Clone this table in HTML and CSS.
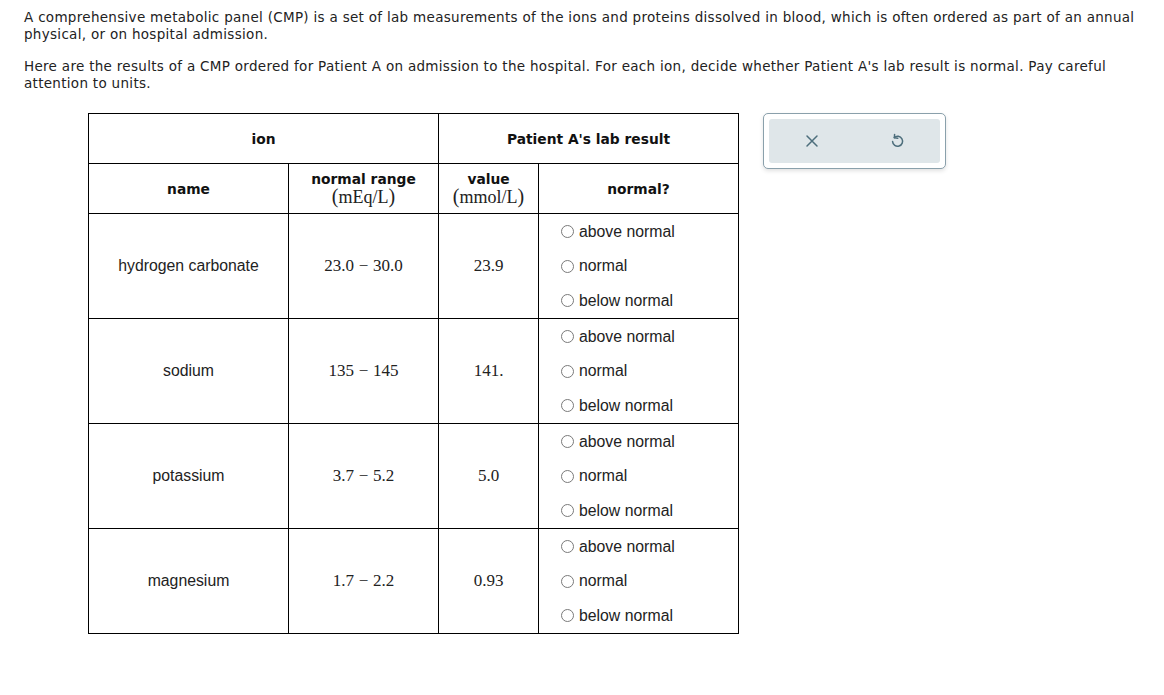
FILE: index.html
```html
<!DOCTYPE html>
<html>
<head>
<meta charset="utf-8">
<link rel="stylesheet" href="styles.css">
</head>
<body>
<div class="page">
  <p class="intro">A comprehensive metabolic panel (CMP) is a set of lab measurements of the ions and proteins dissolved in blood, which is often ordered as part of an annual physical, or on hospital admission.</p>
  <p class="intro">Here are the results of a CMP ordered for Patient A on admission to the hospital. For each ion, decide whether Patient A's lab result is normal. Pay careful attention to units.</p>
  <div class="work">
    <table class="lab">
      <colgroup>
        <col class="c1"><col class="c2"><col class="c3"><col class="c4">
      </colgroup>
      <thead>
        <tr class="hrow">
          <th colspan="2">ion</th>
          <th colspan="2">Patient A's lab result</th>
        </tr>
        <tr class="hrow">
          <th>name</th>
          <th>normal range<br><span class="unit"><span class="paren">(</span>mEq/L<span class="paren">)</span></span></th>
          <th>value<br><span class="unit"><span class="paren">(</span>mmol/L<span class="paren">)</span></span></th>
          <th>normal?</th>
        </tr>
      </thead>
      <tbody>
        <tr class="drow">
          <td class="name">hydrogen carbonate</td>
          <td class="num">23.0<span class="minus">−</span>30.0</td>
          <td class="num">23.9</td>
          <td class="opts">
            <label class="opt"><span class="radio"></span>above normal</label>
            <label class="opt"><span class="radio"></span>normal</label>
            <label class="opt"><span class="radio"></span>below normal</label>
          </td>
        </tr>
        <tr class="drow">
          <td class="name">sodium</td>
          <td class="num">135<span class="minus">−</span>145</td>
          <td class="num">141.</td>
          <td class="opts">
            <label class="opt"><span class="radio"></span>above normal</label>
            <label class="opt"><span class="radio"></span>normal</label>
            <label class="opt"><span class="radio"></span>below normal</label>
          </td>
        </tr>
        <tr class="drow">
          <td class="name">potassium</td>
          <td class="num">3.7<span class="minus">−</span>5.2</td>
          <td class="num">5.0</td>
          <td class="opts">
            <label class="opt"><span class="radio"></span>above normal</label>
            <label class="opt"><span class="radio"></span>normal</label>
            <label class="opt"><span class="radio"></span>below normal</label>
          </td>
        </tr>
        <tr class="drow">
          <td class="name">magnesium</td>
          <td class="num">1.7<span class="minus">−</span>2.2</td>
          <td class="num">0.93</td>
          <td class="opts">
            <label class="opt"><span class="radio"></span>above normal</label>
            <label class="opt"><span class="radio"></span>normal</label>
            <label class="opt"><span class="radio"></span>below normal</label>
          </td>
        </tr>
      </tbody>
    </table>
    <div class="tools">
      <div class="tools-inner">
        <button class="tool" aria-label="clear">
          <svg width="14" height="14" viewBox="0 0 14 14"><path d="M2 2 L12 12 M12 2 L2 12" stroke="#4d6e7c" stroke-width="1.5" fill="none" stroke-linecap="round"/></svg>
        </button>
        <button class="tool" aria-label="undo">
          <svg width="14" height="16" viewBox="0 0 14 16"><path d="M4.2 4.6 A5 5 0 1 1 2.6 8.6" stroke="#4d6e7c" stroke-width="1.5" fill="none" stroke-linecap="round"/><path d="M4.6 1.4 L4.4 4.8 L7.8 5.2" stroke="#4d6e7c" stroke-width="1.5" fill="none" stroke-linecap="round" stroke-linejoin="round"/></svg>
        </button>
      </div>
    </div>
  </div>
</div>
</body>
</html>
```

FILE: styles.css
```css
html, body {
  margin: 0;
  padding: 0;
  background: #fff;
}
.page {
  padding: 9px 24px 0 24px;
  font-family: "DejaVu Sans", Verdana, sans-serif;
  color: #222;
}
.intro {
  margin: 0 0 15px 0;
  font-size: 13.5px;
  letter-spacing: 0.3px;
  line-height: 17px;
}
.work {
  display: flex;
  align-items: flex-start;
  gap: 24px;
  margin-top: 21px;
  padding-left: 64px;
}
.lab {
  border-collapse: collapse;
  table-layout: fixed;
  width: 651px;
}
.c1 { width: 200px; }
.c2 { width: 150px; }
.c3 { width: 100px; }
.c4 { width: 200px; }
.lab th, .lab td {
  border: 1px solid #000;
  padding: 0;
  text-align: center;
  vertical-align: middle;
}
.lab th {
  font-family: "DejaVu Sans", Verdana, sans-serif;
  font-weight: bold;
  font-size: 13.8px;
  line-height: 16px;
  color: #111;
}
.hrow { height: 50px; }
.unit {
  font-family: "Liberation Serif", "Times New Roman", serif;
  font-weight: normal;
  font-size: 18px;
  line-height: 18px;
  color: #222;
}
.paren {
  font-size: 20px;
}
.drow { height: 105px; }
.name {
  font-family: "Liberation Sans", Arial, sans-serif;
  font-size: 15.8px;
  color: #222;
}
.num {
  font-family: "Liberation Serif", "Times New Roman", serif;
  font-size: 17px;
  color: #222;
}
.minus {
  display: inline-block;
  width: 15px;
  text-align: center;
  margin: 0 2px;
}
.lab td.opts {
  text-align: left;
  padding-left: 22px;
}
.opt {
  display: flex;
  align-items: center;
  gap: 5px;
  height: 34.5px;
  font-family: "Liberation Sans", Arial, sans-serif;
  font-size: 15.8px;
  color: #222;
}
.radio {
  width: 11px;
  height: 11px;
  border: 1px solid #7a7a7a;
  border-radius: 50%;
  flex: none;
}
.tools {
  width: 183px;
  height: 56px;
  border: 1px solid #8aa0ab;
  border-radius: 5px;
  box-shadow: 0 2px 4px rgba(0, 0, 0, 0.12);
  padding: 5px;
  box-sizing: border-box;
  background: #fff;
}
.tools-inner {
  display: flex;
  justify-content: space-around;
  align-items: center;
  height: 100%;
  background: #dfe6e9;
  border-radius: 3px;
}
.tool {
  border: none;
  background: transparent;
  padding: 0;
  width: 30px;
  height: 30px;
  display: flex;
  align-items: center;
  justify-content: center;
}
```
